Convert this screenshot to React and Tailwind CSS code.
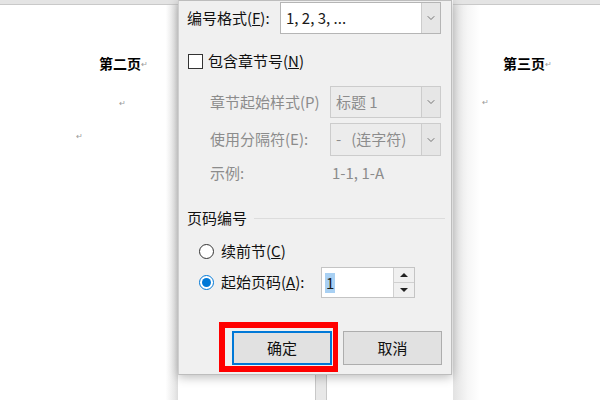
import { ChevronDown } from 'lucide-react'

const FONT = { fontFamily: '"Noto Sans CJK SC", "Noto Sans", sans-serif' }

function Mark({ className = '' }) {
  return <span className={'text-[8px] leading-none text-[#9a9a9a] ' + className}>↵</span>
}

function Combo({ text, disabled, className = '' }) {
  return (
    <div
      className={
        'flex h-full border ' +
        (disabled ? 'border-[#cccccc] bg-[#ececec] text-[#8c8c8c] ' : 'border-[#b5b5b5] bg-white text-[#1a1a1a] ') +
        className
      }
    >
      <div className="flex flex-1 items-center whitespace-pre pl-[5px] text-[15px]">{text}</div>
      <div className="flex w-[19px] items-center justify-center border-l border-[#cccccc] bg-[#e6e6e6]">
        <ChevronDown size={12} strokeWidth={1.6} className="text-[#555555]" />
      </div>
    </div>
  )
}

function Radio({ checked }) {
  return (
    <div
      className={
        'flex h-[15px] w-[15px] items-center justify-center rounded-full border bg-white ' +
        (checked ? 'border-[#0078d7]' : 'border-[#333333]')
      }
    >
      {checked && <div className="h-[9px] w-[9px] rounded-full bg-[#0078d7]" />}
    </div>
  )
}

function Dialog() {
  return (
    <div className="relative z-10 flex h-[375px] w-[274px] flex-col border border-l-[#cfcfcf] border-[#bdbdbd] bg-[#f0f0f0] shadow-[0_2px_10px_rgba(0,0,0,0.28)] text-[15px] text-[#111111]">
      {/* 编号格式 */}
      <div className="mt-[1px] flex h-[32px] items-center">
        <div className="w-[101px] pl-[8px]">编号格式(<u>F</u>):</div>
        <Combo text="1, 2, 3, ..." className="w-[161px]" />
      </div>

      {/* 包含章节号 */}
      <div className="mt-[18px] flex h-[19px] items-center pl-[9px]">
        <div className="h-[15px] w-[15px] border border-[#333333] bg-white" />
        <div className="ml-[5px]">包含章节号(<u>N</u>)</div>
      </div>

      <div className="mt-[15px] flex h-[32px] items-center text-[#8c8c8c]">
        <div className="w-[151px] pl-[31px]">章节起始样式(P)</div>
        <Combo text="标题 1" disabled className="w-[111px]" />
      </div>

      <div className="mt-[5px] flex h-[33px] items-center text-[#8c8c8c]">
        <div className="w-[151px] pl-[31px]">使用分隔符(E):</div>
        <Combo text="-   (连字符)" disabled className="w-[111px]" />
      </div>

      <div className="mt-[8px] flex h-[18px] items-center text-[#8c8c8c]">
        <div className="w-[153px] pl-[31px]">示例:</div>
        <div>1-1, 1-A</div>
      </div>

      {/* 页码编号 */}
      <div className="mt-[26px] flex h-[20px] items-center pl-[8px] pr-[6px]">
        <div>页码编号</div>
        <div className="ml-[7px] h-px flex-1 bg-[#dcdcdc]" />
      </div>

      <div className="mt-[13px] flex h-[20px] items-center pl-[20px]">
        <Radio />
        <div className="ml-[7px]">续前节(<u>C</u>)</div>
      </div>

      <div className="mt-[6px] flex h-[31px] items-center pl-[20px]">
        <Radio checked />
        <div className="ml-[7px] w-[100px]">起始页码(<u>A</u>):</div>
        <div className="flex h-full w-[94px] border border-[#c4c4c4] bg-white">
          <div className="flex flex-1 items-center pl-[3px]">
            <span className="bg-[#a8d0f3] px-[1px] leading-[20px] text-[#1a1a1a]">1</span>
          </div>
          <div className="flex w-[21px] flex-col border-l border-[#d0d0d0]">
            <div className="flex flex-1 items-center justify-center border-b border-[#d0d0d0] bg-[#f0f0f0]">
              <div className="h-0 w-0 border-x-[4px] border-b-[4px] border-x-transparent border-b-[#222]" />
            </div>
            <div className="flex flex-1 items-center justify-center bg-[#f0f0f0]">
              <div className="h-0 w-0 border-x-[4px] border-t-[4px] border-x-transparent border-t-[#222]" />
            </div>
          </div>
        </div>
      </div>

      {/* buttons */}
      <div className="relative mt-[33px] flex gap-[11px] pl-[53px]">
        <div className="pointer-events-none absolute left-[40px] top-[-9px] h-[50px] w-[119px] border-[6px] border-r-[5px] border-[#ff0000]" />
        <button className="flex h-[34px] w-[100px] items-center justify-center border-2 border-[#0078d7] bg-[#e1e1e1]">
          确定
        </button>
        <button className="flex h-[34px] w-[99px] items-center justify-center border border-[#adadad] bg-[#e1e1e1]">
          取消
        </button>
      </div>
    </div>
  )
}

export default function App() {
  return (
    <div style={FONT} className="flex h-[400px] w-[600px] overflow-hidden bg-white">
      {/* 第二页 */}
      <div className="flex w-[178px] flex-col">
        <div className="h-[5px] border-b border-[#c9c9c9] bg-[#e4e4e4]" />
        <div className="flex-1 bg-[linear-gradient(to_right,#ffffff_93%,#e9e9e9_98%,#dcdcdc)]">
          <div className="mt-[49px] flex h-[18px] items-end pl-[99px]">
            <span className="text-[14px] font-bold leading-[18px] text-black">第二页</span>
            <Mark className="mb-[4px]" />
          </div>
          <div className="mt-[22px] h-[10px] pl-[119px] leading-[10px]"><Mark /></div>
          <div className="mt-[23px] h-[10px] pl-[76px] leading-[10px]"><Mark /></div>
        </div>
      </div>

      <div className="flex w-[275px] flex-col">
        <Dialog />
        <div className="flex flex-1 bg-white pl-[137px]">
          <div className="w-[12px] border-x border-[#c8c8c8] bg-[#e8e8e8]" />
        </div>
      </div>

      {/* 第三页 */}
      <div className="flex flex-1 flex-col">
        <div className="h-[5px] border-b border-[#c9c9c9] bg-[#e4e4e4]" />
        <div className="flex-1 bg-[linear-gradient(to_right,#e2e2e2,#f6f6f6_10%,#ffffff_18%)]">
          <div className="mt-[49px] flex h-[18px] items-end pl-[50px]">
            <span className="text-[14px] font-bold leading-[18px] text-black">第三页</span>
            <Mark className="mb-[4px]" />
          </div>
          <div className="mt-[21px] h-[10px] pl-[29px] leading-[10px]"><Mark /></div>
        </div>
      </div>
    </div>
  )
}
